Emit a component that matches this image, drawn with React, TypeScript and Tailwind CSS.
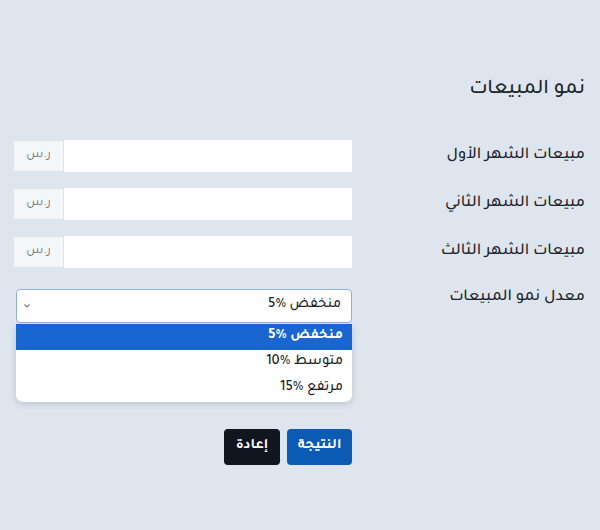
import React from "react";

const months = ["مبيعات الشهر الأول", "مبيعات الشهر الثاني", "مبيعات الشهر الثالث"];
const rates = ["منخفض %5", "متوسط %10", "مرتفع %15"];

export default function App() {
  return (
    <div
      dir="rtl"
      className="min-h-[530px] bg-[#dee5ee] pr-[15px] pl-[13px] pt-[75px] text-[#212529]"
      style={{ fontFamily: 'Tajawal, "Noto Sans Arabic", sans-serif' }}
    >
      <h1 className="text-[21px] leading-[30px] font-medium mb-[35px]">نمو المبيعات</h1>

      {months.map((m) => (
        <div key={m} className="flex items-center mb-4">
          <label className="flex-1 text-[16.5px] font-medium">{m}</label>
          <div className="flex w-[339px] h-[32px]">
            <input className="flex-1 bg-white outline-none px-3 text-sm" />
            <span className="w-[51px] flex items-center justify-center bg-[#f4f6f8] border border-[#dfe3e8] text-[13px] text-[#6c757d]">
              ر.س
            </span>
          </div>
        </div>
      ))}

      <div className="flex items-start mt-[21px]">
        <label className="flex-1 text-[16.5px] font-medium -mt-[3px]">معدل نمو المبيعات</label>
        <div className="w-[339px]">
          <div className="relative w-[336px]">
            <div className="h-[34px] flex items-center justify-between bg-white border border-[#8fb0d8] rounded-[4px] pr-[10px] pl-[6px] text-[14.5px] font-medium">
              <span>{rates[0]}</span>
              <svg width="8" height="6" viewBox="0 0 8 6" className="text-[#777]">
                <path d="M1.5 1.5 L4 4 L6.5 1.5" fill="none" stroke="currentColor" strokeWidth="1.1" />
              </svg>
            </div>
            <ul className="absolute top-[35px] left-0 right-0 bg-white rounded-b-[7px] shadow-[0_2px_6px_rgba(0,0,0,0.15)] text-[14.5px] font-medium overflow-hidden">
              {rates.map((r, i) => (
                <li
                  key={r}
                  className={
                    i === 0
                      ? "h-[26px] flex items-center pr-[9px] bg-[#1a66d0] text-white font-bold"
                      : "h-[26px] flex items-center pr-[9px]"
                  }
                >
                  {r}
                </li>
              ))}
            </ul>
          </div>
        </div>
      </div>

      <div className="flex mt-[106px]">
        <div className="flex-1" />
        <div className="w-[339px] flex gap-[7px]">
          <button className="h-[36px] w-[65px] rounded-[4px] bg-[#0b5ab3] text-white text-[14.5px] font-bold">
            النتيجة
          </button>
          <button className="h-[36px] w-[56px] rounded-[4px] bg-[#111520] text-white text-[14.5px] font-bold">
            إعادة
          </button>
        </div>
      </div>
    </div>
  );
}
